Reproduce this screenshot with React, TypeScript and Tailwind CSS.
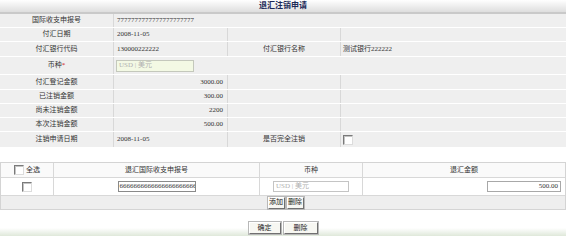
import type { ReactNode } from "react";

const font = {
  fontFamily: '"Liberation Serif", "Noto Sans CJK SC", serif',
};

function Check() {
  return (
    <span className="inline-block h-[10px] w-[10px] bg-white border border-t-[#7a7a7a] border-l-[#7a7a7a] border-b-[#dcdcdc] border-r-[#dcdcdc] shadow-[inset_1px_1px_0_#c4c4c4]" />
  );
}

function Btn({ children, className = "" }: { children: ReactNode; className?: string }) {
  return (
    <button
      className={`flex items-center justify-center h-[12px] bg-[#f7f7f2] border border-t-white border-l-white border-b-[#707070] border-r-[#707070] shadow-[0_0_0_1px_#b8b8b8] text-[7px] leading-none text-[#222] ${className}`}
    >
      {children}
    </button>
  );
}

function Row({ h, children }: { h: string; children: ReactNode }) {
  return (
    <div className={`grid grid-cols-[113px_114px_113px_1fr] border-b border-white ${h}`}>
      {children}
    </div>
  );
}

function Label({ children }: { children: ReactNode }) {
  return (
    <div className="flex items-center justify-center bg-[#efefef] text-[#333]">{children}</div>
  );
}

function Cell({ children, className = "" }: { children?: ReactNode; className?: string }) {
  return (
    <div className={`flex items-center bg-[#efefef] border-l border-[#d8d8d8] text-[#333] ${className}`}>
      {children}
    </div>
  );
}

const amounts: [string, string][] = [
  ["付汇登记金额", "3000.00"],
  ["已注销金额", "300.00"],
  ["尚未注销金额", "2200"],
  ["本次注销金额", "500.00"],
];

export default function App() {
  return (
    <div className="w-[566px] h-[236px] bg-white text-[7px] leading-none overflow-hidden" style={font}>
      {/* title */}
      <div className="h-[14px] flex items-center justify-center bg-gradient-to-b from-white to-[#dedede] border-b-2 border-[#c9c9c9] font-bold text-[8px] text-[#1c2a58]">
        退汇注销申请
      </div>

      {/* main form */}
      <Row h="h-[14px]">
        <Label>国际收支申报号</Label>
        <Cell className="col-span-3 pl-[3px]">7777777777777777777777</Cell>
      </Row>
      <Row h="h-[14px]">
        <Label>付汇日期</Label>
        <Cell className="pl-[3px]">2008-11-05</Cell>
        <Cell />
        <Cell />
      </Row>
      <Row h="h-[15px]">
        <Label>付汇银行代码</Label>
        <Cell className="pl-[3px]">130000222222</Cell>
        <Cell className="justify-center">付汇银行名称</Cell>
        <Cell className="pl-[2px]">测试银行222222</Cell>
      </Row>
      <Row h="h-[18px]">
        <Label>
          币种<span className="text-[#d02020]">*</span>
        </Label>
        <Cell className="col-span-3 pl-[2px]">
          <div className="w-[78px] h-[12px] flex items-center pl-[2px] bg-[#f3f9e4] border border-[#c4c8bc] text-[#b0b0b0]">
            USD | 美元
          </div>
        </Cell>
      </Row>
      {amounts.map(([k, v], i) => (
        <Row key={k} h={i === 0 ? "h-[15px]" : "h-[14px]"}>
          <Label>{k}</Label>
          <Cell className="justify-end pr-[4px]">{v}</Cell>
          <Cell />
          <Cell />
        </Row>
      ))}
      <Row h="h-[16px]">
        <Label>注销申请日期</Label>
        <Cell className="pl-[3px]">2008-11-05</Cell>
        <Cell className="justify-center">是否完全注销</Cell>
        <Cell className="pl-[2px]">
          <Check />
        </Cell>
      </Row>

      {/* detail list */}
      <div className="mt-[14px] border border-[#d4d4d4]">
        <div className="grid grid-cols-[52px_206px_103px_1fr] h-[15px] bg-[#fafafa] border-b border-[#d8d8d8] text-[#333]">
          <div className="flex items-center pl-[13px] gap-[2px]">
            <Check />
            <span>全选</span>
          </div>
          <div className="flex items-center justify-center border-l border-[#d8d8d8]">退汇国际收支申报号</div>
          <div className="flex items-center justify-center border-l border-[#d8d8d8]">币种</div>
          <div className="flex items-center justify-center border-l border-[#d8d8d8]">退汇金额</div>
        </div>
        <div className="grid grid-cols-[52px_206px_103px_1fr] h-[18px] bg-white border-b border-[#d8d8d8] text-[#333]">
          <div className="flex items-center justify-center">
            <Check />
          </div>
          <div className="flex items-center justify-center border-l border-[#d8d8d8]">
            <div className="w-[78px] h-[11px] flex items-center pl-[1px] overflow-hidden whitespace-nowrap bg-white border border-[#8a8a8a]">
              6666666666666666666666
            </div>
          </div>
          <div className="flex items-center justify-center border-l border-[#d8d8d8]">
            <div className="w-[76px] h-[11px] flex items-center pl-[2px] bg-white border border-[#c4c4c4] text-[#b0b0b0]">
              USD | 美元
            </div>
          </div>
          <div className="flex items-center justify-end pr-[4px] border-l border-[#d8d8d8]">
            <div className="w-[74px] h-[11px] flex items-center justify-end pr-[2px] bg-white border border-[#a8a8a8]">
              500.00
            </div>
          </div>
        </div>
        <div className="h-[13px] flex items-center justify-center gap-[2px] bg-[#eeeeee] pl-[5px]">
          <Btn className="w-[17px]">添加</Btn>
          <Btn className="w-[17px]">删除</Btn>
        </div>
      </div>

      {/* bottom actions */}
      <div className="mt-[10px] h-[16px] flex items-center justify-center gap-[3px] pl-[0px] bg-gradient-to-b from-white via-white to-[#dfe8da]">
        <Btn className="w-[32px] h-[11px]">确定</Btn>
        <Btn className="w-[34px] h-[11px]">删除</Btn>
      </div>
    </div>
  );
}
